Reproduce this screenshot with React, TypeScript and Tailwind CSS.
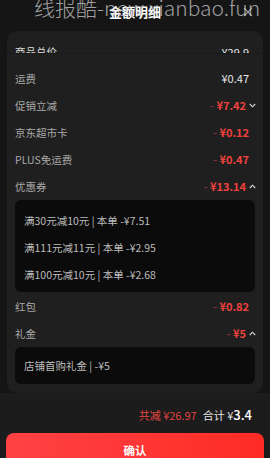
import React from 'react';

const font = { fontFamily: '"Noto Sans CJK SC", "Noto Sans", sans-serif' };

const Chevron: React.FC<{ up?: boolean }> = ({ up }) => (
  <svg width="7" height="5" viewBox="0 0 7 5" className="ml-[3px] text-[#d8d8d8]">
    <polyline
      points={up ? '0.8,4 3.5,1.2 6.2,4' : '0.8,1 3.5,3.8 6.2,1'}
      fill="none"
      stroke="currentColor"
      strokeWidth="1.1"
    />
  </svg>
);

interface RowProps {
  label: string;
  value: string;
  red?: boolean;
  chevron?: 'up' | 'down';
}

const Row: React.FC<RowProps> = ({ label, value, red, chevron }) => (
  <div className="flex h-[27px] items-center justify-between pl-[8px] pr-[7px]">
    <span className="text-[10.5px] text-[#a9a9a9]">{label}</span>
    <div className={`flex items-center ${chevron ? '' : 'pr-[7px]'}`}>
      {red ? (
        <span className="text-[11px] text-[#f0413e]">
          <span className="opacity-70">- </span>
          <span className="font-semibold">{value}</span>
        </span>
      ) : (
        <span className="text-[11px] text-[#e6e6e6]">{value}</span>
      )}
      {chevron && <Chevron up={chevron === 'up'} />}
    </div>
  </div>
);

const coupons = ['满30元减10元 | 本单 -¥7.51', '满111元减11元 | 本单 -¥2.95', '满100元减10元 | 本单 -¥2.68'];

export default function App() {
  return (
    <div className="h-[458px] w-[270px] overflow-hidden bg-[#1c1c1c]" style={font}>
      {/* header */}
      <div className="relative h-[31px] bg-[#151515]">
        <div className="pt-[3px] text-center text-[13px] font-bold leading-[18px] text-white">金额明细</div>
        <svg width="10" height="10" viewBox="0 0 10 10" className="absolute left-[243px] top-[7px] text-[#9a9a9a]">
          <path d="M1 1 L9 9 M9 1 L1 9" stroke="currentColor" strokeWidth="1.1" />
        </svg>
        <div className="pointer-events-none absolute left-[34px] top-[-7px] whitespace-nowrap text-[21px] font-light leading-[28px] text-[#d0d0d0]/75">
          线报酷-new.xianbao.fun
        </div>
      </div>

      {/* detail card */}
      <div className="bg-[#151515]">
        <div className="mx-[7px] rounded-[10px] bg-[#1f1f1f] pb-[9px]">
          <div className="h-[22px] overflow-hidden rounded-t-[10px]">
            <div className="flex items-center justify-between pl-[8px] pr-[14px] pt-[13px] leading-[16px]">
              <span className="text-[10.5px] text-[#dcdcdc]">商品总价</span>
              <span className="text-[11px] text-[#eeeeee]">¥29.9</span>
            </div>
          </div>
          <div className="border-t border-[#1a1a1a] pt-[11px]">
            <Row label="运费" value="¥0.47" />
            <Row label="促销立减" value="¥7.42" red chevron="down" />
            <Row label="京东超市卡" value="¥0.12" red />
            <Row label="PLUS免运费" value="¥0.47" red />
            <Row label="优惠券" value="¥13.14" red chevron="up" />
            <div className="mx-[8px] rounded-[6px] bg-[#0b0b0b] pb-[4px] pt-[7px]">
              {coupons.map((c) => (
                <div key={c} className="flex h-[27px] items-center pl-[9px] text-[10.5px] text-[#bdbdbd]">
                  {c}
                </div>
              ))}
            </div>
            <div className="pt-[1px]">
              <Row label="红包" value="¥0.82" red />
              <Row label="礼金" value="¥5" red chevron="up" />
            </div>
            <div className="mx-[8px] rounded-[6px] bg-[#0b0b0b] py-[5px]">
              <div className="flex h-[27px] items-center pl-[9px] text-[10.5px] text-[#bdbdbd]">店铺首购礼金 | -¥5</div>
            </div>
          </div>
        </div>
      </div>

      {/* summary */}
      <div className="flex h-[40px] items-center justify-end pr-[18px] pt-[4px]">
        <span className="text-[11px] text-[#e0443f]">共减 ¥26.97</span>
        <span className="ml-[6px] text-[11px] text-[#e6e6e6]">合计 ¥</span>
        <span className="text-[13px] font-medium text-white">3.4</span>
      </div>

      {/* confirm button */}
      <div className="px-[6px]">
        <button className="flex h-[36px] w-full items-start justify-center rounded-[8px] bg-gradient-to-r from-[#ff4143] to-[#ff2b24] pt-[9px] text-[11.5px] font-bold text-white">
          确认
        </button>
      </div>
    </div>
  );
}
